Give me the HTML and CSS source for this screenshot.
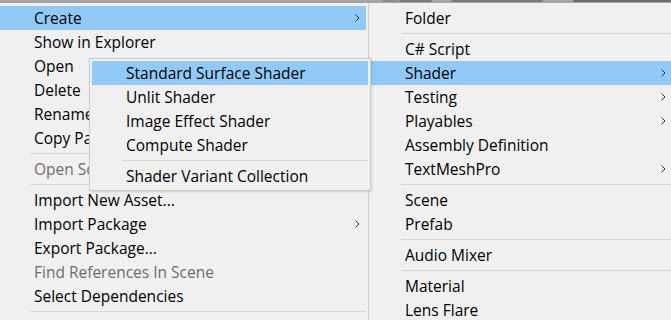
FILE: index.html
```html
<!DOCTYPE html>
<html>
<head>
<meta charset="utf-8">
<link rel="stylesheet" href="styles.css">
</head>
<body>
<div class="screen">
  <div class="topbar">
    <span class="seg seg-a"></span>
    <span class="seg seg-b"></span>
    <span class="seg seg-c"></span>
    <span class="seg seg-d"></span>
  </div>
  <div class="menus">
    <div class="menu main">
      <div class="row active"><span class="label">Create</span><svg class="chev" width="5" height="8" viewBox="0 0 5 8"><polyline points="0.5,0.5 4,4 0.5,7.5" /></svg></div>
      <div class="row"><span class="label">Show in Explorer</span></div>
      <div class="row"><span class="label">Open</span></div>
      <div class="row"><span class="label">Delete</span></div>
      <div class="row"><span class="label">Rename</span></div>
      <div class="row"><span class="label">Copy Path</span></div>
      <div class="sep"></div>
      <div class="row disabled"><span class="label">Open Scene Additive</span></div>
      <div class="sep"></div>
      <div class="row"><span class="label">Import New Asset...</span></div>
      <div class="row"><span class="label">Import Package</span><svg class="chev" width="5" height="8" viewBox="0 0 5 8"><polyline points="0.5,0.5 4,4 0.5,7.5" /></svg></div>
      <div class="row"><span class="label">Export Package...</span></div>
      <div class="row disabled"><span class="label">Find References In Scene</span></div>
      <div class="row"><span class="label">Select Dependencies</span></div>
      <div class="sep"></div>
    </div>
    <div class="menu create">
      <div class="row"><span class="label">Folder</span></div>
      <div class="sep"></div>
      <div class="row"><span class="label">C# Script</span></div>
      <div class="row active"><span class="label">Shader</span><svg class="chev" width="5" height="8" viewBox="0 0 5 8"><polyline points="0.5,0.5 4,4 0.5,7.5" /></svg></div>
      <div class="row"><span class="label">Testing</span><svg class="chev" width="5" height="8" viewBox="0 0 5 8"><polyline points="0.5,0.5 4,4 0.5,7.5" /></svg></div>
      <div class="row"><span class="label">Playables</span><svg class="chev" width="5" height="8" viewBox="0 0 5 8"><polyline points="0.5,0.5 4,4 0.5,7.5" /></svg></div>
      <div class="row"><span class="label">Assembly Definition</span></div>
      <div class="row"><span class="label">TextMeshPro</span><svg class="chev" width="5" height="8" viewBox="0 0 5 8"><polyline points="0.5,0.5 4,4 0.5,7.5" /></svg></div>
      <div class="sep"></div>
      <div class="row"><span class="label">Scene</span></div>
      <div class="row"><span class="label">Prefab</span></div>
      <div class="sep"></div>
      <div class="row"><span class="label">Audio Mixer</span></div>
      <div class="sep"></div>
      <div class="row"><span class="label">Material</span></div>
      <div class="row"><span class="label">Lens Flare</span></div>
    </div>
  </div>
  <div class="menu shader">
    <div class="row active"><span class="label">Standard Surface Shader</span></div>
    <div class="row"><span class="label">Unlit Shader</span></div>
    <div class="row"><span class="label">Image Effect Shader</span></div>
    <div class="row"><span class="label">Compute Shader</span></div>
    <div class="sep"></div>
    <div class="row"><span class="label">Shader Variant Collection</span></div>
  </div>
</div>
</body>
</html>
```

FILE: styles.css
```css
* { box-sizing: border-box; }

html, body {
  margin: 0;
  padding: 0;
  width: 671px;
  height: 320px;
  overflow: hidden;
  background: #a4a4a4;
}

.screen {
  position: relative;
  width: 671px;
  height: 320px;
  overflow: hidden;
  font-family: "Open Sans", "Noto Sans", sans-serif;
  font-size: 15.5px;
  color: #000;
}

.topbar {
  height: 3px;
  display: flex;
  background: #a4a4a4;
}

.seg {
  display: block;
  height: 2px;
  background: #7a7a7a;
  border-radius: 0 0 2px 2px;
}
.seg-a { margin-left: 382px; width: 16px; background: #8c8c8c; }
.seg-b { margin-left: 1px; width: 34px; }
.seg-c { margin-left: 19px; width: 95px; }
.seg-d { margin-left: 30px; width: 100px; background: #6c6c6c; }

.menus {
  display: flex;
  align-items: flex-start;
  height: 317px;
}

.menu {
  background: #f0f0f0;
}

.main {
  width: 368px;
  flex: none;
  padding: 3px 2px 0 0;
  height: 317px;
}

.create {
  flex: none;
  width: 306px;
  height: 317px;
  padding: 3px 0 0 0;
  border-left: 1px solid #cccccc;
}

.row {
  height: 24px;
  display: flex;
  align-items: center;
  white-space: nowrap;
  line-height: 24px;
}

.row.active {
  background: #91c9f7;
}

.row.disabled {
  color: #6d6d6d;
}

.label {
  flex: 1;
}

.chev {
  flex: none;
  fill: none;
  stroke: #333333;
  stroke-width: 1;
}

.main .row {
  padding-left: 34px;
  padding-right: 6px;
}

.create .row {
  padding-left: 36px;
  padding-right: 8px;
  width: 305px;
}

.sep {
  height: 7px;
  padding-top: 3px;
}
.sep::before {
  content: "";
  display: block;
  height: 1px;
  background: #d7d7d7;
}

.main .sep { margin-left: 30px; }
.create .sep { margin-left: 32px; }

.shader {
  position: absolute;
  left: 89px;
  top: 58px;
  width: 282px;
  border: 1px solid #cccccc;
  padding: 2px;
  box-shadow: 1px 1px 2px rgba(0,0,0,0.12);
}

.shader .row {
  padding-left: 34px;
}

.shader .sep { margin-left: 30px; }
```
